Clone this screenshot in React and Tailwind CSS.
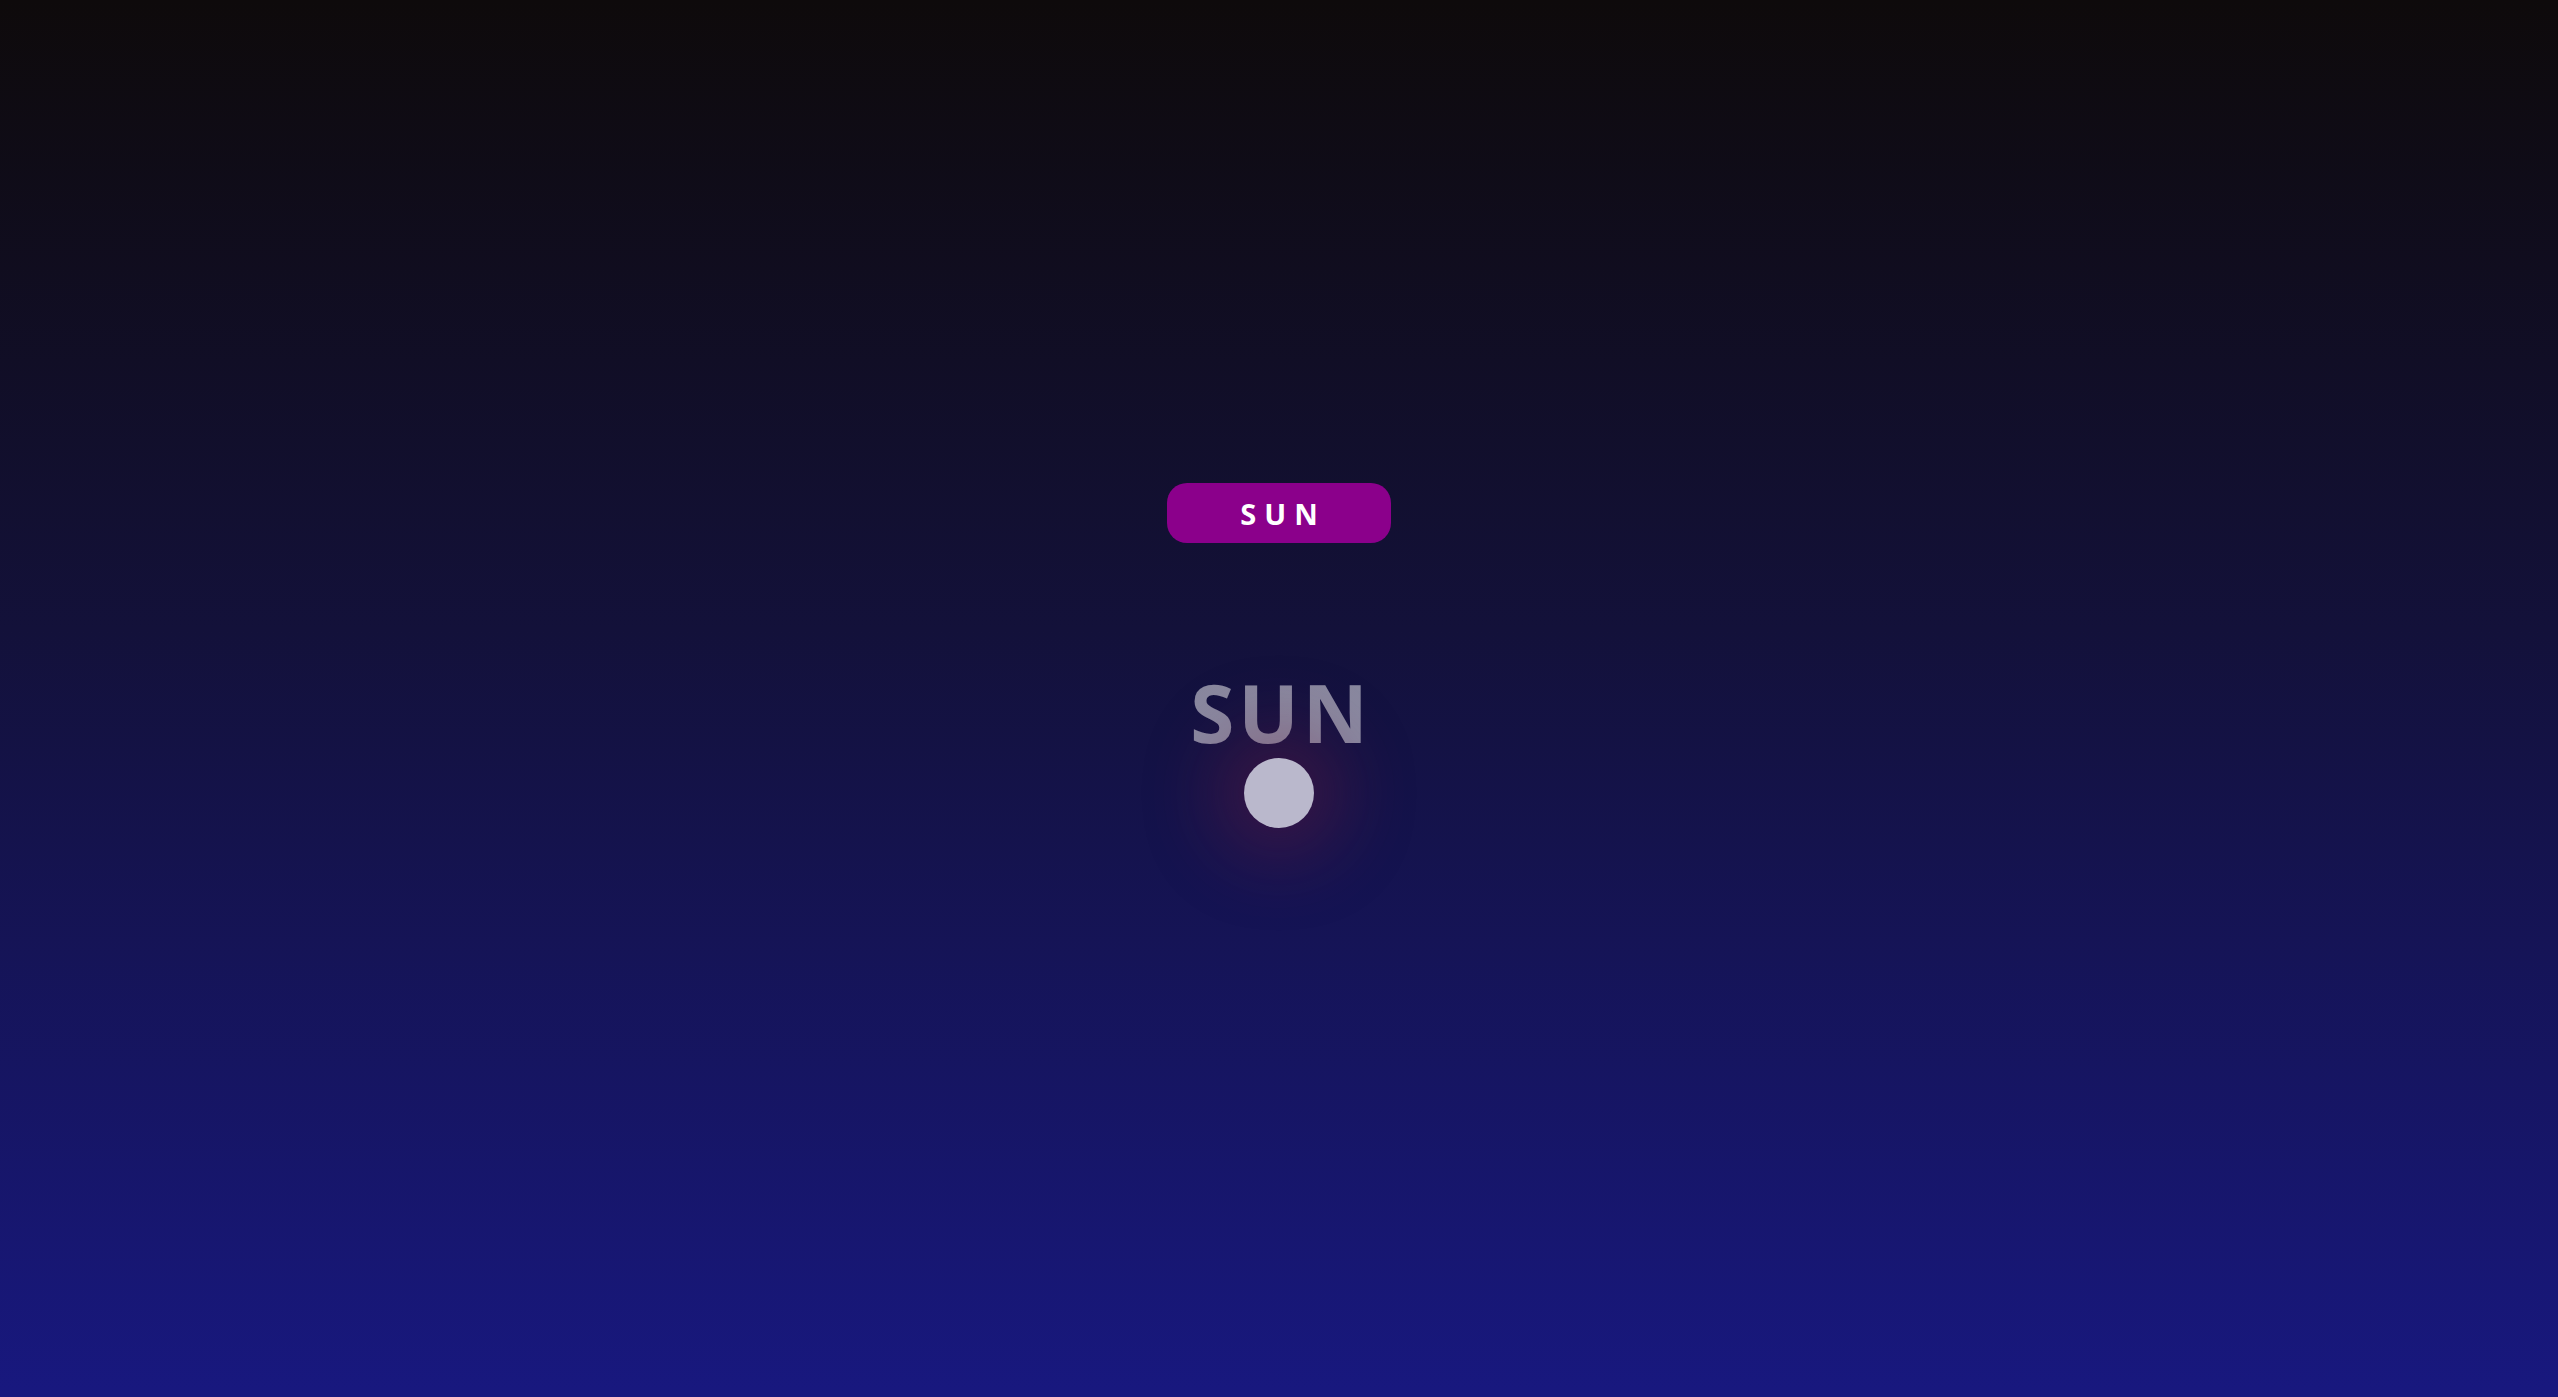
export default function App() {
  return (
    <div
      className="min-h-screen w-full flex flex-col items-center bg-[linear-gradient(to_bottom,#0e0a0b_0%,#13113a_45%,#18187f_100%)]"
      style={{ fontFamily: '"Open Sans", "Noto Sans", sans-serif' }}
    >
      <div className="mt-[483px] w-[224px] h-[60px] rounded-[20px] bg-[#8b008b] flex items-center justify-center">
        <span className="text-white font-bold text-[29px] leading-none tracking-[8px] pl-[8px]">SUN</span>
      </div>
      <div className="mt-[129px] text-[80px] leading-[80px] font-bold text-white/50 tracking-[4px] pl-[4px]">SUN</div>
      <div className="mt-[6px] w-[70px] h-[70px] rounded-full bg-[#bab8cc] shadow-[0_0_70px_30px_rgba(120,30,60,0.35)]"></div>
    </div>
  );
}
